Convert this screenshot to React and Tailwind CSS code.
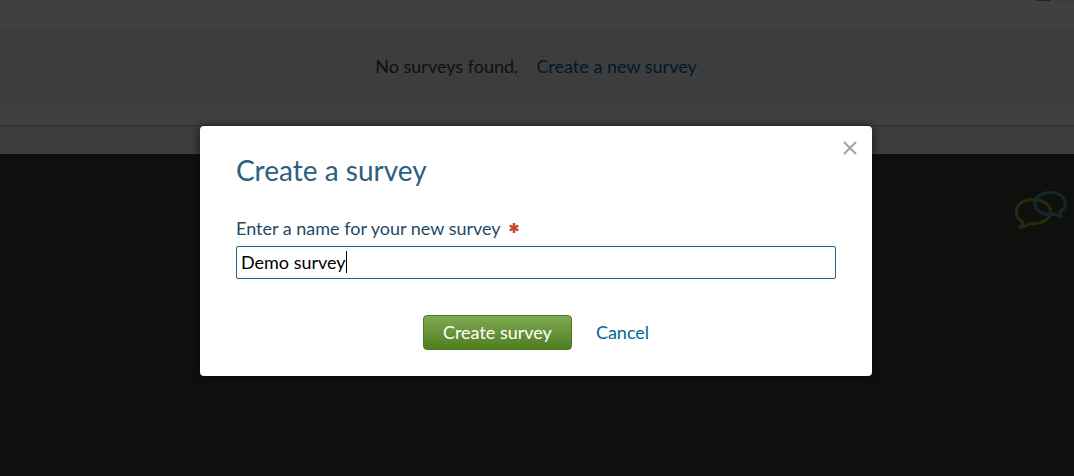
import { useState } from "react";

function ChatIcon() {
  return (
    <svg width="54" height="40" viewBox="0 0 54 40" fill="none" strokeWidth="3" strokeLinejoin="round" aria-hidden="true">
      <path stroke="#8aac40" d="M19.500 9.500C10.500 9.500 3.500 14.500 3.500 21.500C3.500 26.500 6 30 10 32C10 34 8.800 35.500 7 37C11 37 14.500 35.500 17 33.500C28.500 34.500 37.500 29 37.500 21.500C37.500 14.500 29.500 9.500 19.500 9.500Z" />
      <path stroke="#5a98bc" d="M37 2.500C28.500 2.500 22 7 22 13.500C22 20 28.500 24.500 37 24.500C39 24.500 40.500 24.300 42 24C44 25.800 46 26.700 48.500 27C47.500 25.500 47 23.500 47 22C50.500 20 52.300 17.300 52.300 13.500C52.300 7 46 2.500 37 2.500Z" />
    </svg>
  );
}

function SurveyPage() {
  return (
    <div className="flex min-h-screen flex-col bg-[#3c3c34]">
      <main className="bg-white">
        <div className="flex h-[29px] items-start justify-end gap-2">
          <span className="h-px w-[13px] bg-[#808080]" />
          <span className="h-[3px] w-4 rounded-bl bg-[#e0f0f0]" />
        </div>
        <div className="flex h-[75px] items-center justify-center gap-[18px] bg-[#f4f4f4] pb-0.5 pr-0.5 text-lg">
          <p className="text-[#404040]">No surveys found.</p>
          <a href="#create" className="text-[#006699]">Create a new survey</a>
        </div>
        <div className="h-[21px]" />
      </main>
      <div className="h-[29px] border-t-2 border-[#d4d4d4] bg-[#f0f0e8]" />
      <div className="flex justify-end pr-[7px] pt-9">
        <ChatIcon />
      </div>
    </div>
  );
}

function CreateSurveyDialog() {
  const [name, setName] = useState("Demo survey");
  return (
    <div className="absolute inset-0 flex items-start justify-center bg-black/75 pr-0.5 pt-[126px]">
      <form
        role="dialog"
        aria-labelledby="dialog-title"
        onSubmit={(e) => e.preventDefault()}
        className="relative w-full max-w-2xl rounded bg-white px-9 pb-[26px] pt-6 shadow-[0_0_10px_rgba(0,0,0,0.6)]"
      >
        <button type="button" aria-label="Close" className="absolute right-[13px] top-[13px] p-0.5 text-[#a8a49c]">
          <svg width="14" height="14" viewBox="0 0 14 14" stroke="currentColor" strokeWidth="2.200" aria-hidden="true">
            <path d="M1 1L13 13M13 1L1 13" />
          </svg>
        </button>
        <h1 id="dialog-title" className="text-[28px] leading-10 text-[#2b6080]">Create a survey</h1>
        <label htmlFor="survey-name" className="mt-6 flex items-center gap-2 text-lg leading-7 text-[#1f4a66]">
          Enter a name for your new survey
          <svg width="10" height="10" viewBox="0 0 10 10" stroke="#d0452f" strokeWidth="2.600" aria-hidden="true">
            <path d="M5 0V10M0.700 2.500L9.300 7.500M9.300 2.500L0.700 7.500" />
          </svg>
        </label>
        <div className="mt-1 flex h-[33px] items-center rounded-xs border border-[#2b6080] px-1 pb-0.5">
          <input
            id="survey-name"
            value={name}
            onChange={(e) => setName(e.target.value)}
            required
            className="field-sizing-content bg-transparent text-lg leading-7 text-black outline-none"
          />
          <span className="h-[22px] w-px bg-black" />
        </div>
        <div className="mt-9 flex items-center justify-center gap-6">
          <button
            type="submit"
            className="h-[35px] rounded border border-[#4c7a1e] bg-linear-to-b from-[#82aa54] to-[#4f7d1c] px-[19px] pb-0.5 text-lg leading-7 text-white"
          >
            Create survey
          </button>
          <button type="button" className="pb-0.5 text-lg leading-7 text-[#006699]">Cancel</button>
        </div>
      </form>
    </div>
  );
}

export default function App() {
  return (
    <div className="relative min-h-screen overflow-hidden font-['Lato',sans-serif]">
      <SurveyPage />
      <CreateSurveyDialog />
    </div>
  );
}
